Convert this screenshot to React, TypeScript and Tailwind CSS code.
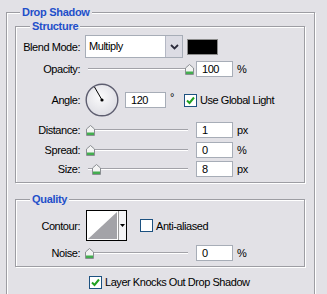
const etched = "border border-[#9d9da3] shadow-[inset_1px_1px_0_#fff,1px_1px_0_#fff]";
const legendCls = "px-[2px] bg-[#e2e1e6] font-bold text-[#1f4fca] leading-[14px] tracking-[-0.3px]";

function Thumb({ left }: { left: number }) {
  return (
    <svg
      className="absolute top-[3px]"
      style={{ left }}
      width="9"
      height="11"
      viewBox="0 0 9 11"
    >
      <path d="M0.5 4 L4.5 0.5 L8.5 4 V10.5 H0.5 Z" fill="#f3f3f3" stroke="#8a8e92" />
      <rect x="1" y="7.5" width="7" height="2.5" fill="#43ad4f" />
    </svg>
  );
}

function Slider({ pos }: { pos: number }) {
  return (
    <div className="relative h-[16px] w-[105px]">
      <div className="absolute left-[3px] right-[2px] top-[7px] h-[2px] border-t border-b border-t-[#a2a2a8] border-b-white" />
      <Thumb left={pos} />
    </div>
  );
}

function NumBox({ value, w = 37 }: { value: string; w?: number }) {
  return (
    <div
      className="h-[16px] border border-[#a7adb7] bg-white pl-[5px] leading-[14px] text-black"
      style={{ width: w }}
    >
      {value}
    </div>
  );
}

function Check({ checked }: { checked: boolean }) {
  return (
    <div className="h-[13px] w-[13px] shrink-0 border border-[#1c5180] bg-white">
      {checked && (
        <svg width="11" height="11" viewBox="0 0 11 11">
          <path d="M2 5.5 L4.5 8 L9 2.5" fill="none" stroke="#21a121" strokeWidth="2" />
        </svg>
      )}
    </div>
  );
}

function Label({ children }: { children: string }) {
  return <div className="w-[64px] shrink-0 text-right">{children}</div>;
}

function SliderRow({ label, pos, value, unit, mt }: { label: string; pos: number; value: string; unit: string; mt: string }) {
  return (
    <div className={`flex h-[16px] items-center gap-[5px] ${mt}`}>
      <Label>{label}</Label>
      <Slider pos={pos} />
      <div className="ml-[1px]">
        <NumBox value={value} />
      </div>
      <span className="ml-[-1px]">{unit}</span>
    </div>
  );
}

export default function App() {
  return (
    <div className="h-[294px] overflow-hidden bg-[#e2e1e6] pt-[5px] pl-[6px] font-['Liberation_Sans',Arial,sans-serif] text-[11px] leading-[14px] tracking-[-0.45px] text-black">
      <fieldset className={`w-[309px] ${etched} pl-[8px] pb-[30px]`}>
        <legend className={`ml-[5px] ${legendCls}`}>Drop Shadow</legend>

        <fieldset className={`w-[290px] ${etched} pb-[5px]`}>
          <legend className={`ml-[14px] ${legendCls}`}>Structure</legend>

          <div className="mt-[2px] flex h-[23px] items-center gap-[5px]">
            <Label>Blend Mode:</Label>
            <div className="flex h-[23px] w-[98px] border border-[#a7adb7] bg-white">
              <div className="flex-1 pl-[3px] leading-[21px]">Multiply</div>
              <div className="flex w-[17px] items-center justify-center border-l border-[#b4b8c4] bg-[#dcdce4]">
                <svg width="9" height="6" viewBox="0 0 9 6">
                  <path d="M1 1 L4.5 4.5 L8 1" fill="none" stroke="#2c2c3c" strokeWidth="1.8" />
                </svg>
              </div>
            </div>
            <div className="ml-[-1px] h-[16px] w-[31px] border border-[#8c8c8c] bg-black" />
          </div>

          <SliderRow label="Opacity:" pos={100} value="100" unit="%" mt="mt-[3px]" />

          <div className="mt-[6px] flex h-[34px] items-center gap-[5px]">
            <Label>Angle:</Label>
            <svg width="34" height="34" viewBox="0 0 34 34">
              <defs>
                <radialGradient id="dial" cx="0.45" cy="0.4" r="0.6">
                  <stop offset="0" stopColor="#fbfbfc" />
                  <stop offset="1" stopColor="#dedee4" />
                </radialGradient>
              </defs>
              <circle cx="17" cy="17" r="15.8" fill="url(#dial)" stroke="#5e5e70" strokeWidth="1.4" />
              <line x1="17" y1="17" x2="9.5" y2="4" stroke="#000" strokeWidth="1" />
              <circle cx="17" cy="17" r="1.6" fill="#000" />
            </svg>
            <div className="ml-[1px]">
              <NumBox value="120" w={41} />
            </div>
            <span className="ml-[-1px] self-start pt-[7px]">°</span>
            <div className="ml-[5px] flex items-center gap-[3px]">
              <Check checked />
              <span>Use Global Light</span>
            </div>
          </div>

          <SliderRow label="Distance:" pos={1} value="1" unit="px" mt="mt-[5px]" />
          <SliderRow label="Spread:" pos={1} value="0" unit="%" mt="mt-[4px]" />
          <SliderRow label="Size:" pos={7} value="8" unit="px" mt="mt-[3px]" />
        </fieldset>

        <fieldset className={`mt-[9px] w-[290px] ${etched} pb-[5px]`}>
          <legend className={`ml-[14px] ${legendCls}`}>Quality</legend>

          <div className="mt-[4px] flex h-[31px] items-center gap-[5px]">
            <Label>Contour:</Label>
            <div className="ml-[1px] flex h-[31px] w-[41px] border border-black bg-white">
              <svg width="31" height="29" viewBox="0 0 31 29">
                <polygon points="1,28 30,1 30,28" fill="#a3a3a8" />
              </svg>
              <div className="flex flex-1 items-center justify-center border-l border-[#9a9a9a] bg-[#f4f4f6]">
                <svg width="5" height="3" viewBox="0 0 5 3">
                  <polygon points="0,0 5,0 2.5,3" fill="#000" />
                </svg>
              </div>
            </div>
            <div className="ml-[8px] flex items-center gap-[3px]">
              <Check checked={false} />
              <span>Anti-aliased</span>
            </div>
          </div>

          <SliderRow label="Noise:" pos={0} value="0" unit="%" mt="mt-[4px]" />
        </fieldset>

        <div className="mt-[8px] flex items-center gap-[3px] pl-[74px]">
          <Check checked />
          <span>Layer Knocks Out Drop Shadow</span>
        </div>
      </fieldset>
    </div>
  );
}
